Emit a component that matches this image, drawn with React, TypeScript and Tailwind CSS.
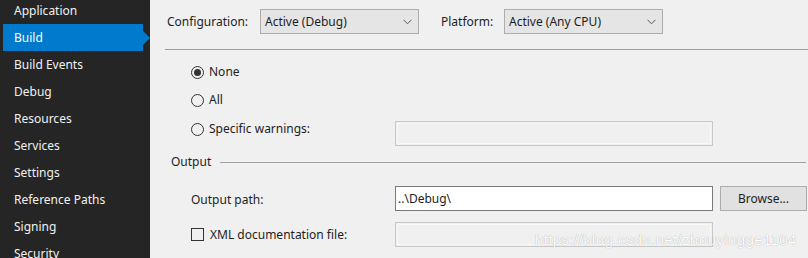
import React from "react";

const navItems = [
  "Application",
  "Build",
  "Build Events",
  "Debug",
  "Resources",
  "Services",
  "Settings",
  "Reference Paths",
  "Signing",
  "Security",
];

const Chevron = () => (
  <svg width="9" height="6" viewBox="0 0 9 6" className="shrink-0">
    <path d="M0.5 0.8 L4.5 4.8 L8.5 0.8" fill="none" stroke="#555" strokeWidth="1" />
  </svg>
);

const Select = ({ value, width }: { value: string; width: string }) => (
  <div
    className={`${width} h-[25px] flex items-center justify-between pl-[4px] pr-[6px] bg-[#e5e5e5] border border-[#adadad] text-[#1e1e1e]`}
  >
    <span>{value}</span>
    <Chevron />
  </div>
);

const Radio = ({ checked, label }: { checked?: boolean; label: string }) => (
  <div className="flex items-center gap-[5px]">
    <span className="w-[13px] h-[13px] rounded-full border border-[#333] flex items-center justify-center bg-[#f0f0f0]">
      {checked && <span className="w-[7px] h-[7px] rounded-full bg-[#333]" />}
    </span>
    <span>{label}</span>
  </div>
);

const DisabledBox = () => (
  <div className="w-[318px] h-[25px] border border-[#c8c8c8] p-px">
    <div className="w-full h-full border border-[#f8f8f8]" />
  </div>
);

export default function App() {
  return (
    <div
      className="w-[808px] h-[258px] flex overflow-hidden bg-[#f0f0f0] text-[12px] leading-none"
      style={{ fontFamily: '"Noto Sans", "Open Sans", sans-serif' }}
    >
      <div className="w-[150px] shrink-0 bg-[#252526] text-[#f1f1f1] relative">
        <div className="-mt-[3px] flex flex-col">
          {navItems.map((item) => (
            <div key={item} className="relative h-[27px] flex items-center">
              {item === "Build" ? (
                <div className="ml-[3px] w-[140px] h-full bg-[#007acc] flex items-center pl-[11px] relative text-white">
                  {item}
                  <span className="absolute -right-[7px] top-1/2 -translate-y-1/2 w-0 h-0 border-y-[7px] border-y-transparent border-l-[7px] border-l-[#007acc]" />
                </div>
              ) : (
                <span className="pl-[14px]">{item}</span>
              )}
            </div>
          ))}
        </div>
      </div>

      <div className="flex-1 relative text-[#1e1e1e]">
        <div className="pt-[9px] pl-[17px] flex items-center h-[34px]">
          <span className="w-[93px]">Configuration:</span>
          <Select value="Active (Debug)" width="w-[159px]" />
          <span className="ml-[22px] w-[63px]">Platform:</span>
          <Select value="Active (Any CPU)" width="w-[159px]" />
        </div>
        <div className="mt-[15px] ml-[15px] h-px bg-[#a0a0a0]" />

        <div className="pl-[41px] flex flex-col">
          <div className="h-[14px] mt-[15px] flex items-center">
            <Radio checked label="None" />
          </div>
          <div className="h-[14px] mt-[14px] flex items-center">
            <Radio label="All" />
          </div>
          <div className="mt-[14px] h-[25px] flex items-start">
            <div className="w-[204px] h-[14px] mt-px flex items-center">
              <Radio label="Specific warnings:" />
            </div>
            <DisabledBox />
          </div>
        </div>

        <div className="mt-[9px] pl-[21px] flex items-center h-[14px]">
          <span>Output</span>
          <div className="ml-[9px] flex-1 h-px bg-[#a0a0a0] mr-[2px]" />
        </div>

        <div className="mt-[17px] pl-[41px] flex items-center h-[25px]">
          <span className="w-[204px] pt-[2px]">Output path:</span>
          <div className="w-[318px] h-[25px] bg-white border border-[#7a7a7a] flex items-center pl-[2px]">
            ..\Debug\
          </div>
          <div className="ml-[7px] w-[87px] h-[25px] bg-[#e1e1e1] border border-[#adadad] flex items-center justify-center">
            Browse...
          </div>
        </div>

        <div className="mt-[11px] pl-[41px] flex items-center h-[25px]">
          <div className="w-[204px] flex items-center gap-[6px]">
            <span className="w-[13px] h-[13px] border border-[#333] bg-[#f0f0f0]" />
            <span>XML documentation file:</span>
          </div>
          <DisabledBox />
        </div>

        <div
          className="absolute left-[385px] top-[232px] text-[15px] tracking-[0.4px] text-white whitespace-nowrap"
          style={{ fontFamily: '"Liberation Sans", Arial, sans-serif', textShadow: "0 0 1px rgba(0,0,0,0.4)" }}
        >
          https://blog.csdn.net/zhouyingge1104
        </div>
      </div>
    </div>
  );
}
